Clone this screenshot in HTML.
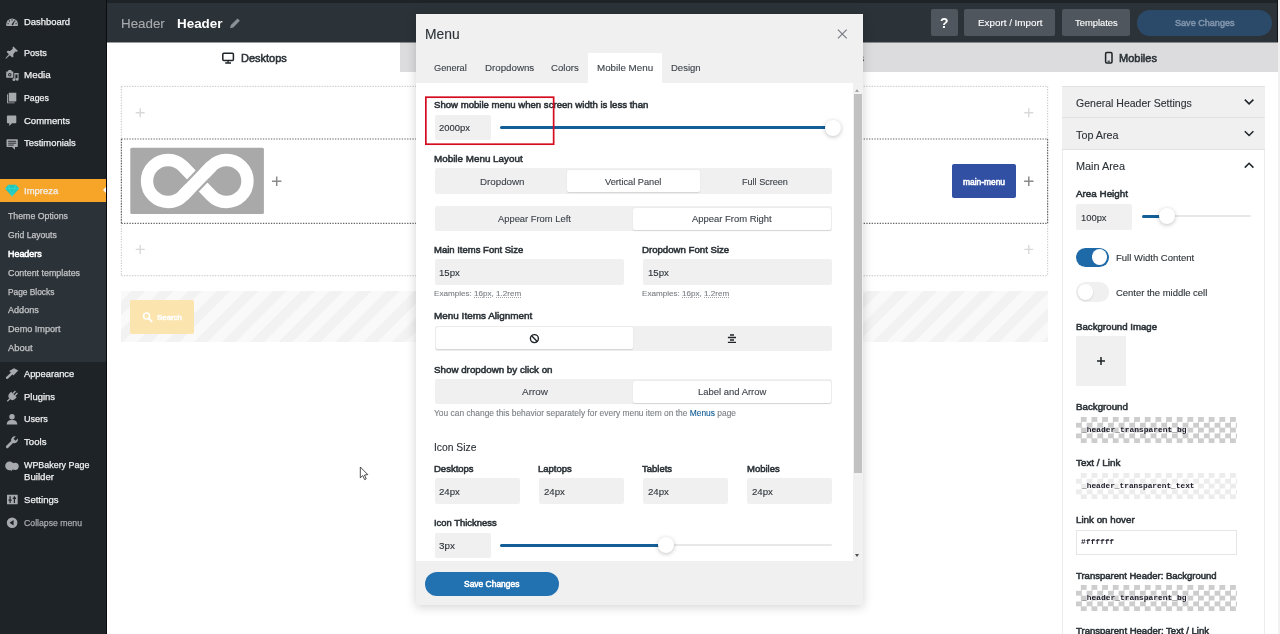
<!DOCTYPE html>
<html lang="en"><head><meta charset="utf-8"><title>Header Builder</title>
<style>
html,body{margin:0;padding:0}
body{width:1280px;height:634px;position:relative;overflow:hidden;background:#fff;font-family:"Liberation Sans",sans-serif}
.t{position:absolute;white-space:nowrap;line-height:20px;height:20px;will-change:transform;-webkit-text-stroke:.12px currentColor}
.t u{text-decoration:underline dotted #a0a3a8;text-underline-offset:1.2px;text-decoration-thickness:1px}
.t b{color:#135e96;font-weight:400}
.a{position:absolute}
.m{position:absolute;z-index:10}
.inp{position:absolute;background:#f0f0f1;border-radius:2px;z-index:10}
.seg{position:absolute;background:#f0f0f1;border-radius:2px;z-index:10}
.on{position:absolute;background:#fff;border-radius:2px;box-shadow:0 0.5px 1.2px rgba(0,0,0,.12);z-index:11}
.chk{position:absolute;left:1076px;width:161.2px;height:26.3px;background:repeating-conic-gradient(#cdcdcd 0% 25%,#fff 0% 50%) 0 0/10.66px 10.66px}
.knob{position:absolute;width:16px;height:16px;border-radius:50%;background:#fff;box-shadow:0 1px 4px rgba(0,0,0,.25)}
svg{position:absolute;overflow:visible}

.sb{-webkit-text-stroke:.25px currentColor}

</style></head>
<body>
<!-- ===== admin sidebar ===== -->
<div class="a" style="left:0;top:0;width:107px;height:634px;background:#1d2327"></div>
<div class="a" style="left:0;top:201.6px;width:107px;height:160.4px;background:#2c3338"></div>
<div class="a" style="left:0;top:179px;width:107px;height:22.8px;background:#f7a528"></div>
<div class="a" style="left:102.5px;top:186px;width:0;height:0;border-top:4.5px solid transparent;border-bottom:4.5px solid transparent;border-right:4.5px solid #fff"></div>
<div class="a" style="left:106px;top:0;width:1.2px;height:634px;background:#0a0c10"></div>
<!-- ===== top bar ===== -->
<div class="a" style="left:107px;top:0;width:1171px;height:42.4px;background:#2c3338"></div>
<div class="a" style="left:107px;top:0;width:1171px;height:2.6px;background:#1d2327"></div>
<div class="a" style="left:931px;top:9px;width:26.5px;height:27px;background:#4f565d;border-radius:2px"></div>
<div class="a" style="left:964.4px;top:9px;width:90.6px;height:27px;background:#4f565d;border-radius:2px"></div>
<div class="a" style="left:1061.8px;top:9px;width:68.2px;height:27px;background:#4f565d;border-radius:2px"></div>
<div class="a" style="left:1136.7px;top:9.5px;width:134.9px;height:26.5px;background:#2b4a6a;border-radius:13.3px"></div>
<!-- ===== tabs ===== -->
<div class="a" style="left:107px;top:42px;width:293px;height:1px;background:#969a9d"></div>
<div class="a" style="left:400px;top:42px;width:878px;height:1px;background:#84888b;z-index:1"></div>
<div class="a" style="left:400px;top:42.4px;width:878px;height:29.8px;background:#dcdcde"></div>
<div class="a" style="left:1278px;top:0;width:2px;height:634px;background:#f1f1f1"></div>
<div class="a" style="left:1277px;top:0;width:1px;height:42px;background:#101418"></div>
<!-- ===== builder ===== -->
<div class="a" style="left:121px;top:291.4px;width:927px;height:50.6px;background:repeating-linear-gradient(135deg,#f9f9f9 -2.5px,#f9f9f9 7px,#f2f2f2 8px,#f2f2f2 17px,#f9f9f9 17.5px)"></div>
<div class="a" style="left:130px;top:300px;width:64px;height:33.5px;background:#fbe4ad;border-radius:2px"></div>
<div class="a" style="left:951.7px;top:164.4px;width:64.3px;height:33.3px;background:#3150a3;border-radius:2px"></div>
<!-- ===== right panel ===== -->
<div class="a" style="left:1062px;top:86px;width:202.5px;height:548px;background:#fff;border-left:1.5px solid #ececec;border-right:1.5px solid #ececec;box-sizing:border-box"></div>
<div class="a" style="left:1062px;top:86px;width:202.5px;height:63px;background:#f0f0f1"></div>
<div class="a" style="left:1062px;top:86px;width:202.5px;height:1px;background:#e2e2e4"></div>
<div class="a" style="left:1062px;top:117px;width:202.5px;height:1px;background:#e2e2e4"></div>
<div class="a" style="left:1062px;top:148.5px;width:202.5px;height:1px;background:#e2e2e4"></div>
<div class="a" style="left:1076px;top:204px;width:56.2px;height:25.8px;background:#f0f0f1;border-radius:2px"></div>
<div class="a" style="left:1141.6px;top:215.3px;width:109px;height:2px;background:#e8e8e8;border-radius:1px"></div>
<div class="a" style="left:1141.6px;top:214.9px;width:20px;height:3px;background:#135e96;border-radius:1.5px"></div>
<div class="knob" style="left:1158.6px;top:208.3px"></div>
<div class="a" style="left:1076px;top:247.6px;width:32.7px;height:19.2px;background:#1e69a8;border-radius:9.6px"></div>
<div class="a" style="left:1091.6px;top:249.4px;width:15.6px;height:15.6px;background:#fff;border-radius:50%"></div>
<div class="a" style="left:1076px;top:282.4px;width:32.7px;height:19.2px;background:#f0f0f1;border-radius:9.6px"></div>
<div class="a" style="left:1077.6px;top:284.2px;width:15.6px;height:15.6px;background:#fff;border-radius:50%;box-shadow:0 1px 2px rgba(0,0,0,.12)"></div>
<div class="a" style="left:1076px;top:336px;width:50.1px;height:50.1px;background:#f0f0f1"></div>
<div class="chk" style="top:416.7px"></div>
<div class="chk" style="top:473px"></div>
<div class="a" style="left:1076px;top:473px;width:161.2px;height:26.3px;background:rgba(255,255,255,.62)"></div>
<div class="a" style="left:1076px;top:529.5px;width:161.2px;height:25.8px;background:#fff;border:1px solid #e6e6e6;box-sizing:border-box"></div>
<div class="chk" style="top:585px"></div>
<!-- ===== modal ===== -->
<div class="m" style="left:415.7px;top:14px;width:447.1px;height:590.6px;background:#f0f0f1;box-shadow:0 2px 10px rgba(0,0,0,.18)"></div>
<div class="m" style="left:415.7px;top:82.6px;width:447.1px;height:478px;background:#fff"></div>
<div class="m" style="left:588px;top:53px;width:74px;height:30px;background:#fff"></div>
<!-- scrollbar -->
<div class="m" style="left:852.6px;top:82.6px;width:10.2px;height:478px;background:#f1f1f1"></div>
<div class="m" style="left:853.7px;top:94.4px;width:8px;height:378.4px;background:#c1c1c1"></div>
<div class="m" style="left:855px;top:88.6px;width:0;height:0;border-left:2.7px solid transparent;border-right:2.7px solid transparent;border-bottom:3px solid #a3a3a3"></div>
<div class="m" style="left:855px;top:553.6px;width:0;height:0;border-left:2.7px solid transparent;border-right:2.7px solid transparent;border-top:3px solid #505050"></div>
<!-- field 1 -->
<div class="inp" style="left:434.5px;top:114.8px;width:56.3px;height:25.7px"></div>
<div class="m" style="left:500.4px;top:126.3px;width:332px;height:3px;background:#135e96;border-radius:1.5px"></div>
<div class="knob m" style="left:824.7px;top:119.7px;z-index:12"></div>
<!-- segmented controls -->
<div class="seg" style="left:434.5px;top:168.2px;width:397.9px;height:26.2px"></div>
<div class="on" style="left:567px;top:170.2px;width:132.5px;height:22px"></div>
<div class="seg" style="left:434.5px;top:206px;width:397.9px;height:25.3px"></div>
<div class="on" style="left:633.2px;top:207.6px;width:197.7px;height:22px"></div>
<!-- font size inputs -->
<div class="inp" style="left:434.5px;top:259.2px;width:189.2px;height:25.8px"></div>
<div class="inp" style="left:642.8px;top:259.2px;width:189.6px;height:25.8px"></div>
<div class="seg" style="left:434.5px;top:325.8px;width:397.9px;height:25.3px"></div>
<div class="on" style="left:436px;top:327.4px;width:197px;height:22px"></div>
<div class="seg" style="left:434.5px;top:379px;width:397.9px;height:25.3px"></div>
<div class="on" style="left:633.2px;top:380.6px;width:197.7px;height:22px"></div>
<!-- icon size -->
<div class="inp" style="left:434.5px;top:478.3px;width:85.3px;height:25.8px"></div>
<div class="inp" style="left:538.7px;top:478.3px;width:85px;height:25.8px"></div>
<div class="inp" style="left:642.8px;top:478.3px;width:85.2px;height:25.8px"></div>
<div class="inp" style="left:747.2px;top:478.3px;width:85.2px;height:25.8px"></div>
<div class="inp" style="left:434.5px;top:532.7px;width:56.3px;height:25.8px"></div>
<div class="m" style="left:500.4px;top:544.2px;width:332px;height:2px;background:#e8e8e8;border-radius:1px"></div>
<div class="m" style="left:500.4px;top:543.8px;width:160px;height:3px;background:#135e96;border-radius:1.5px"></div>
<div class="knob m" style="left:657.6px;top:537.2px;z-index:12"></div>
<!-- footer -->
<div class="m" style="left:415.7px;top:560.6px;width:447.1px;height:44px;background:#f0f0f1"></div>
<div class="m" style="left:424.8px;top:571.6px;width:134.6px;height:24.2px;background:#2271b1;border-radius:12.1px"></div>
<!-- ===== builder grid (dotted) ===== -->
<svg style="left:0;top:0" width="1280" height="634" viewBox="0 0 1280 634">
 <g fill="none" stroke-width="1.2" stroke-dasharray="1.33 1.34">
  <path d="M121.4 86.4H1047.6M121.4 275.6H1047.6M121.4 86.4V275.6M1047.6 86.4V275.6" stroke="#cfcfcf"/>
  <path d="M121.4 139H1047.6M121.4 223.4H1047.6M121.4 139V223.4M1047.6 139V223.4" stroke="#666"/>
 </g>
 <!-- plus signs -->
 <g stroke="#d9d9d9" stroke-width="1.4" fill="none">
  <path d="M135.7 112.8h9M140.2 108.3v9M135.7 249.4h9M140.2 244.9v9M1024.3 112.8h9M1028.8 108.3v9M1024.3 249.4h9M1028.8 244.9v9"/>
 </g>
 <g stroke="#8a8a8a" stroke-width="1.5" fill="none">
  <path d="M272 181.2h9.4M276.7 176.5v9.4M1024.1 181.2h9.4M1028.8 176.5v9.4"/>
 </g>
 <!-- logo placeholder -->
 <rect x="130.3" y="147.7" width="133.6" height="66.4" rx="1.5" fill="#a9a9a9"/>
 <g fill="none" stroke="#fff" stroke-width="12.4">
  <path d="M183.1 195.6A21 21 0 1 1 183.1 166.4L211.4 195.6A21 21 0 1 0 211.4 166.4Z"/>
 </g>
 <path d="M190.2 188.3L204.3 173.7" stroke="#a9a9a9" stroke-width="17" fill="none"/>
 <path d="M183.1 195.6L211.4 166.4" stroke="#fff" stroke-width="12.4" fill="none"/>
 <!-- search icon -->
 <circle cx="146.6" cy="316" r="3" fill="none" stroke="#fff" stroke-width="1.6"/>
 <path d="M148.8 318.4l2.9 3" stroke="#fff" stroke-width="2" stroke-linecap="round"/>
 <!-- pencil -->
 <path d="M230 28.3l0.9-3.3 6.6-6.6 2.4 2.4-6.6 6.6z" fill="#8c9196"/>
 <!-- desktop icon -->
 <rect x="222.8" y="53.2" width="10.6" height="7.2" rx="1" fill="none" stroke="#1d2327" stroke-width="1.5"/>
 <path d="M228.1 60.6v2M225.2 63h5.8" stroke="#1d2327" stroke-width="1.3" fill="none"/>
 <!-- mobile icon -->
 <rect x="1105.6" y="52.6" width="6.4" height="10.4" rx="1.2" fill="none" stroke="#1d2327" stroke-width="1.5"/>
 <path d="M1107.6 61.2h2.4" stroke="#1d2327" stroke-width="1"/>
 <!-- chevrons in right panel -->
 <g fill="none" stroke="#1d2327" stroke-width="1.5">
  <path d="M1244.8 99.6l4.3 4.3 4.3-4.3M1244.8 131.2l4.3 4.3 4.3-4.3M1244.8 167.6l4.3-4.3 4.3 4.3"/>
 </g>
 <!-- upload plus -->
 <path d="M1097 361h8M1101 357v8" stroke="#1d2327" stroke-width="1.5"/>
 <!-- sidebar icons -->
 <g fill="#a7aaad">
  <!-- dashboard -->
  <path d="M6.200 24.300a5.900 5.900 0 0 1 11.800 0c0 .7-.1 1.300-.4 1.800H6.600c-.3-.5-.4-1.100-.4-1.800z"/>
  <g fill="#1d2327"><circle cx="8.100" cy="23.700" r=".65"/><circle cx="9.400" cy="21" r=".65"/><circle cx="12.100" cy="19.900" r=".65"/><circle cx="14.800" cy="21" r=".65"/><circle cx="16.100" cy="23.700" r=".65"/><path d="M11.500 24.600l2.300-3.300.8.500-1.700 3.600z"/></g>
  <!-- posts (pin) -->
  <path d="M13.400 46.400l4.600 4.600-1.300.7-1.200-.2-2.300 2.700.3 2.400-1.300 1-2.300-2.300-3.900 3.400-.6-.5 3.500-3.900-2.300-2.300 1.100-1.300 2.400.3 2.700-2.300-.3-1.200z"/>
  <!-- media -->
  <path d="M6.200 71.500h1.700l.7-1.600h2.500l.7 1.600h1.500v6.300H6.200z"/>
  <circle cx="9.800" cy="74.700" r="1.700" fill="#1d2327"/><circle cx="9.800" cy="74.700" r=".8"/>
  <path d="M14.300 73h4.300v6.400a1.500 1.300 0 1 1-1.100-1.300v-3.600h-2.100v5.200a1.500 1.300 0 1 1-1.100-1.300z"/>
  <!-- pages -->
  <path d="M8.800 92.700h7.500v8.700H8.800zM7.100 94.300h1v8.100h6.500v.9H7.100z"/>
  <!-- comments -->
  <path d="M7.700 115.500h7.800c.5 0 .8.300.8.800v6.100c0 .5-.3.800-.8.800h-3.400l-2.900 2.800v-2.800H7.700c-.5 0-.8-.3-.8-.8v-6.100c0-.5.3-.8.800-.8z"/>
  <!-- testimonials -->
  <path d="M7.300 139.200h9.700c.5 0 .8.300.8.800v6.200c0 .5-.3.800-.8.800h-2v2.800l-3-2.800H7.300c-.5 0-.8-.3-.8-.8V140c0-.5.3-.8.800-.8z"/>
  <path d="M8.200 141.300h8M8.200 143.200h8M8.200 145.100h5.600" stroke="#1d2327" stroke-width=".9" fill="none"/>
  <!-- appearance (brush) -->
  <path d="M9.300 371L14 368.200l4.300 2.400-4.900 5z"/>
  <path d="M11.600 373.600L7 377.800" stroke="#a7aaad" stroke-width="2.400" stroke-linecap="round"/>
  <!-- plugins -->
  <g transform="rotate(45 12 396.500)"><rect x="9.900" y="390.200" width="1.400" height="3.400"/><rect x="12.700" y="390.200" width="1.400" height="3.400"/><path d="M8.100 393.800h7.800v2.100a3.900 3.900 0 0 1-7.800 0z"/><rect x="11.300" y="399.500" width="1.400" height="3.600"/></g>
  <!-- users -->
  <circle cx="12" cy="416.700" r="2.700"/>
  <path d="M6.700 424.500c0-3.200 2.200-4.500 5.300-4.500s5.300 1.300 5.300 4.500z"/>
  <!-- tools (wrench) -->
  <path d="M18 439.400a3.700 3.700 0 0 1-5 3.500l-4.700 4.900a1.400 1.400 0 0 1-2-2l4.900-4.700a3.700 3.700 0 0 1 4.600-4.600l-2.300 2.300 2 2 2.400-2.300c.1.300.1.600.1.900z"/>
  <!-- wpbakery -->
  <circle cx="9.600" cy="465.800" r="4.400"/><circle cx="15.100" cy="466.300" r="3.600"/><path d="M9.800 469.500l1.600 1.600 1.800-2z"/>
  <!-- settings -->
  <path d="M7 494.800h10.700v9.500H7zM9.500 496.300v3.200h-1v1.300h1v2.200h1.200v-2.200h1v-1.300h-1v-3.200zM13.800 496.300v1.300h-1v1.300h1v4.100H15v-4.100h1v-1.300h-1v-1.300z" fill-rule="evenodd"/>
  <!-- collapse -->
  <path d="M12.100 517.400a5.300 5.300 0 1 1 0 10.600 5.300 5.300 0 0 1 0-10.600zM13.600 519.900L9.500 522.700l4.100 2.800z" fill-rule="evenodd"/>
 </g>
 <!-- impreza diamond -->
 <path d="M8.300 184.800h7.600l3.300 3.600-7.100 8-7.100-8z" fill="#20c7bd"/>
 <path d="M8.300 184.800l3.800 11.600 3.800-11.600M5 188.400h14.200" stroke="#3fe0d4" stroke-width=".6" fill="none"/>
</svg>
<!-- modal overlays icons -->
<svg style="left:0;top:0;z-index:25" width="1280" height="634" viewBox="0 0 1280 634">
 <path d="M837.900 29.600l8.800 8.800M846.700 29.600l-8.800 8.800" stroke="#787c82" stroke-width="1.2" fill="none"/>
 <circle cx="534.400" cy="338.600" r="4" fill="none" stroke="#1d2327" stroke-width="1.4"/>
 <path d="M531.600 335.800l5.600 5.600" stroke="#1d2327" stroke-width="1.4"/>
 <path d="M730 335h4M727.900 337.500h8.100M730 340h4M727.900 342.400h8.100" stroke="#1d2327" stroke-width="1.3"/>
 <rect x="425.85" y="97.2" width="127.8" height="47" fill="none" stroke="#d30d1f" stroke-width="1.7"/>
 <!-- cursor -->
 <path d="M360.300 467V477.800L362.800 475.600L364.600 479.600L366.200 478.900L364.500 475L367.800 474.600Z" fill="#fff" stroke="#222" stroke-width=".8"/>
</svg>

<span class="t sb" style='left:23.8px;top:12.2px;font-size:9.44px;color:#f0f0f1;'>Dashboard</span>
<span class="t sb" style='left:23.8px;top:42.5px;font-size:9.11px;color:#f0f0f1;'>Posts</span>
<span class="t sb" style='left:23.8px;top:65.2px;font-size:9.83px;color:#f0f0f1;'>Media</span>
<span class="t sb" style='left:23.8px;top:88.0px;font-size:8.74px;color:#f0f0f1;'>Pages</span>
<span class="t sb" style='left:23.8px;top:110.7px;font-size:9.51px;color:#f0f0f1;'>Comments</span>
<span class="t sb" style='left:23.8px;top:133.4px;font-size:9.41px;color:#f0f0f1;'>Testimonials</span>
<span class="t sb" style='left:23.8px;top:180.5px;font-size:9.49px;color:#f0f0f1;'>Impreza</span>
<span class="t sb" style='left:23.8px;top:363.9px;font-size:9.31px;color:#f0f0f1;'>Appearance</span>
<span class="t sb" style='left:23.8px;top:386.6px;font-size:9.48px;color:#f0f0f1;'>Plugins</span>
<span class="t sb" style='left:23.8px;top:409.3px;font-size:9.11px;color:#f0f0f1;'>Users</span>
<span class="t sb" style='left:23.8px;top:432.2px;font-size:9.63px;color:#f0f0f1;'>Tools</span>
<span class="t sb" style='left:23.8px;top:455.1px;font-size:8.91px;color:#f0f0f1;'>WPBakery Page</span>
<span class="t sb" style='left:23.8px;top:467.0px;font-size:9.67px;color:#f0f0f1;'>Builder</span>
<span class="t sb" style='left:23.8px;top:490.0px;font-size:9.57px;color:#f0f0f1;'>Settings</span>
<span class="t sb" style='left:23.8px;top:513.0px;font-size:8.71px;color:#a7aaad;'>Collapse menu</span>
<span class="t sb" style='left:8.0px;top:206.0px;font-size:8.78px;color:#c3c4c7;'>Theme Options</span>
<span class="t sb" style='left:8.0px;top:225.0px;font-size:8.62px;color:#c3c4c7;'>Grid Layouts</span>
<span class="t sb" style='left:8.0px;top:262.6px;font-size:8.88px;color:#c3c4c7;'>Content templates</span>
<span class="t sb" style='left:8.0px;top:281.5px;font-size:8.35px;color:#c3c4c7;'>Page Blocks</span>
<span class="t sb" style='left:8.0px;top:300.2px;font-size:9.08px;color:#c3c4c7;'>Addons</span>
<span class="t sb" style='left:8.0px;top:318.7px;font-size:9.12px;color:#c3c4c7;'>Demo Import</span>
<span class="t sb" style='left:8.0px;top:337.6px;font-size:9.45px;color:#c3c4c7;'>About</span>
<span class="t" style='left:8.0px;top:243.9px;font-size:8.94px;color:#fff;-webkit-text-stroke:.55px currentColor;'>Headers</span>
<span class="t" style='left:120.8px;top:13.7px;font-size:13.35px;color:#a7aaad;'>Header</span>
<span class="t" style='left:177.1px;top:13.7px;font-size:13.42px;color:#fff;font-weight:700;-webkit-text-stroke:0;'>Header</span>
<span class="t" style='left:940.1px;top:12.5px;font-size:13.91px;color:#fff;font-weight:700;-webkit-text-stroke:0;'>?</span>
<span class="t" style='left:977.6px;top:12.7px;font-size:9.84px;color:#fff;'>Export / Import</span>
<span class="t" style='left:1074.9px;top:12.7px;font-size:9.37px;color:#fff;'>Templates</span>
<span class="t" style='left:1174.6px;top:13.2px;font-size:9.08px;color:#7f93aa;-webkit-text-stroke:.55px currentColor;'>Save Changes</span>
<span class="t" style='left:240.8px;top:48.0px;font-size:11.00px;color:#2c3338;-webkit-text-stroke:.55px currentColor;'>Desktops</span>
<span class="t" style='left:533.6px;top:48.0px;font-size:11.00px;color:#2c3338;-webkit-text-stroke:.55px currentColor;'>Laptops</span>
<span class="t" style='left:829.2px;top:48.0px;font-size:11.00px;color:#2c3338;-webkit-text-stroke:.55px currentColor;'>Tablets</span>
<span class="t" style='left:1119.1px;top:48.0px;font-size:11.00px;color:#2c3338;-webkit-text-stroke:.55px currentColor;'>Mobiles</span>
<span class="t" style='left:156.6px;top:307.9px;font-size:7.89px;color:#fff;-webkit-text-stroke:.55px currentColor;'>Search</span>
<span class="t" style='left:963.0px;top:172.0px;font-size:8.41px;color:#fff;-webkit-text-stroke:.55px currentColor;'>main-menu</span>
<span class="t" style='left:1075.6px;top:93.2px;font-size:10.53px;color:#2c3338;'>General Header Settings</span>
<span class="t" style='left:1075.6px;top:124.8px;font-size:10.79px;color:#2c3338;'>Top Area</span>
<span class="t" style='left:1075.6px;top:156.2px;font-size:10.88px;color:#2c3338;'>Main Area</span>
<span class="t" style='left:1075.6px;top:184.0px;font-size:9.85px;color:#2c3338;-webkit-text-stroke:.55px currentColor;'>Area Height</span>
<span class="t" style='left:1081.2px;top:207.9px;font-size:9.39px;color:#2c3338;'>100px</span>
<span class="t" style='left:1116.3px;top:247.6px;font-size:9.51px;color:#2c3338;'>Full Width Content</span>
<span class="t" style='left:1116.3px;top:282.6px;font-size:9.45px;color:#2c3338;'>Center the middle cell</span>
<span class="t" style='left:1075.6px;top:316.9px;font-size:9.67px;color:#2c3338;-webkit-text-stroke:.55px currentColor;'>Background Image</span>
<span class="t" style='left:1075.6px;top:396.6px;font-size:9.74px;color:#2c3338;-webkit-text-stroke:.55px currentColor;'>Background</span>
<span class="t" style='left:1081.6px;top:419.6px;font-size:7.91px;color:#1d1d2b;font-weight:700;-webkit-text-stroke:0;font-family:"Liberation Mono", monospace;'>_header_transparent_bg</span>
<span class="t" style='left:1075.6px;top:453.0px;font-size:9.88px;color:#2c3338;-webkit-text-stroke:.55px currentColor;'>Text / Link</span>
<span class="t" style='left:1081.6px;top:476.0px;font-size:7.82px;color:#1d1d2b;font-weight:700;-webkit-text-stroke:0;font-family:"Liberation Mono", monospace;'>_header_transparent_text</span>
<span class="t" style='left:1075.6px;top:509.7px;font-size:9.78px;color:#2c3338;-webkit-text-stroke:.55px currentColor;'>Link on hover</span>
<span class="t" style='left:1080.9px;top:532.0px;font-size:7.88px;color:#1d1d2b;font-weight:700;-webkit-text-stroke:0;font-family:"Liberation Mono", monospace;'>#ffffff</span>
<span class="t" style='left:1075.6px;top:565.9px;font-size:9.50px;color:#2c3338;-webkit-text-stroke:.55px currentColor;'>Transparent Header: Background</span>
<span class="t" style='left:1081.6px;top:588.2px;font-size:7.91px;color:#1d1d2b;font-weight:700;-webkit-text-stroke:0;font-family:"Liberation Mono", monospace;'>_header_transparent_bg</span>
<span class="t" style='left:1075.6px;top:620.8px;font-size:9.54px;color:#2c3338;-webkit-text-stroke:.55px currentColor;'>Transparent Header: Text / Link</span>
<span class="t" style='left:424.7px;top:23.9px;font-size:13.83px;color:#2c3338;z-index:20;'>Menu</span>
<span class="t" style='left:433.8px;top:58.0px;font-size:9.22px;color:#3c434a;z-index:20;'>General</span>
<span class="t" style='left:484.6px;top:58.0px;font-size:9.72px;color:#3c434a;z-index:20;'>Dropdowns</span>
<span class="t" style='left:551.0px;top:58.0px;font-size:9.62px;color:#3c434a;z-index:20;'>Colors</span>
<span class="t" style='left:596.9px;top:58.0px;font-size:9.80px;color:#3c434a;z-index:20;'>Mobile Menu</span>
<span class="t" style='left:670.9px;top:58.0px;font-size:9.51px;color:#3c434a;z-index:20;'>Design</span>
<span class="t" style='left:433.8px;top:95.0px;font-size:9.61px;color:#2c3338;-webkit-text-stroke:.55px currentColor;z-index:20;'>Show mobile menu when screen width is less than</span>
<span class="t" style='left:439.4px;top:118.0px;font-size:9.45px;color:#2c3338;z-index:20;'>2000px</span>
<span class="t" style='left:434.1px;top:149.0px;font-size:9.86px;color:#2c3338;-webkit-text-stroke:.55px currentColor;z-index:20;'>Mobile Menu Layout</span>
<span class="t" style='left:479.6px;top:172.0px;font-size:9.78px;color:#3c434a;z-index:20;'>Dropdown</span>
<span class="t" style='left:605.2px;top:172.0px;font-size:9.22px;color:#3c434a;z-index:20;'>Vertical Panel</span>
<span class="t" style='left:741.9px;top:172.0px;font-size:9.08px;color:#3c434a;z-index:20;'>Full Screen</span>
<span class="t" style='left:498.4px;top:208.6px;font-size:9.37px;color:#3c434a;z-index:20;'>Appear From Left</span>
<span class="t" style='left:692.4px;top:208.6px;font-size:9.45px;color:#3c434a;z-index:20;'>Appear From Right</span>
<span class="t" style='left:434.1px;top:239.7px;font-size:9.51px;color:#2c3338;-webkit-text-stroke:.55px currentColor;z-index:20;'>Main Items Font Size</span>
<span class="t" style='left:642.4px;top:239.7px;font-size:9.65px;color:#2c3338;-webkit-text-stroke:.55px currentColor;z-index:20;'>Dropdown Font Size</span>
<span class="t" style='left:439.4px;top:263.0px;font-size:9.64px;color:#2c3338;z-index:20;'>15px</span>
<span class="t" style='left:647.7px;top:263.0px;font-size:9.64px;color:#2c3338;z-index:20;'>15px</span>
<span class="t" style='left:434.1px;top:283.9px;font-size:8.11px;color:#7c8086;z-index:20;'>Examples: <u>16px</u>, <u>1.2rem</u></span>
<span class="t" style='left:642.4px;top:283.9px;font-size:8.11px;color:#7c8086;z-index:20;'>Examples: <u>16px</u>, <u>1.2rem</u></span>
<span class="t" style='left:434.1px;top:306.2px;font-size:9.95px;color:#2c3338;-webkit-text-stroke:.55px currentColor;z-index:20;'>Menu Items Alignment</span>
<span class="t" style='left:434.1px;top:359.7px;font-size:9.79px;color:#2c3338;-webkit-text-stroke:.55px currentColor;z-index:20;'>Show dropdown by click on</span>
<span class="t" style='left:521.7px;top:381.7px;font-size:9.95px;color:#3c434a;z-index:20;'>Arrow</span>
<span class="t" style='left:698.1px;top:381.7px;font-size:9.46px;color:#3c434a;z-index:20;'>Label and Arrow</span>
<span class="t" style='left:434.1px;top:402.9px;font-size:8.42px;color:#7c8086;z-index:20;'>You can change this behavior separately for every menu item on the <b>Menus</b> page</span>
<span class="t" style='left:434.1px;top:437.7px;font-size:10.31px;color:#2c3338;z-index:20;'>Icon Size</span>
<span class="t" style='left:434.1px;top:459.2px;font-size:9.50px;color:#2c3338;-webkit-text-stroke:.55px currentColor;z-index:20;'>Desktops</span>
<span class="t" style='left:538.3px;top:459.2px;font-size:9.50px;color:#2c3338;-webkit-text-stroke:.55px currentColor;z-index:20;'>Laptops</span>
<span class="t" style='left:642.3px;top:459.2px;font-size:9.50px;color:#2c3338;-webkit-text-stroke:.55px currentColor;z-index:20;'>Tablets</span>
<span class="t" style='left:746.8px;top:459.2px;font-size:9.50px;color:#2c3338;-webkit-text-stroke:.55px currentColor;z-index:20;'>Mobiles</span>
<span class="t" style='left:439.4px;top:482.0px;font-size:9.64px;color:#2c3338;z-index:20;'>24px</span>
<span class="t" style='left:543.6px;top:482.0px;font-size:9.64px;color:#2c3338;z-index:20;'>24px</span>
<span class="t" style='left:647.7px;top:482.0px;font-size:9.64px;color:#2c3338;z-index:20;'>24px</span>
<span class="t" style='left:752.1px;top:482.0px;font-size:9.64px;color:#2c3338;z-index:20;'>24px</span>
<span class="t" style='left:434.1px;top:513.0px;font-size:9.44px;color:#2c3338;-webkit-text-stroke:.55px currentColor;z-index:20;'>Icon Thickness</span>
<span class="t" style='left:439.4px;top:536.4px;font-size:9.86px;color:#2c3338;z-index:20;'>3px</span>
<span class="t" style='left:464.4px;top:573.8px;font-size:8.46px;color:#fff;-webkit-text-stroke:.55px currentColor;z-index:20;'>Save Changes</span>
</body></html>
